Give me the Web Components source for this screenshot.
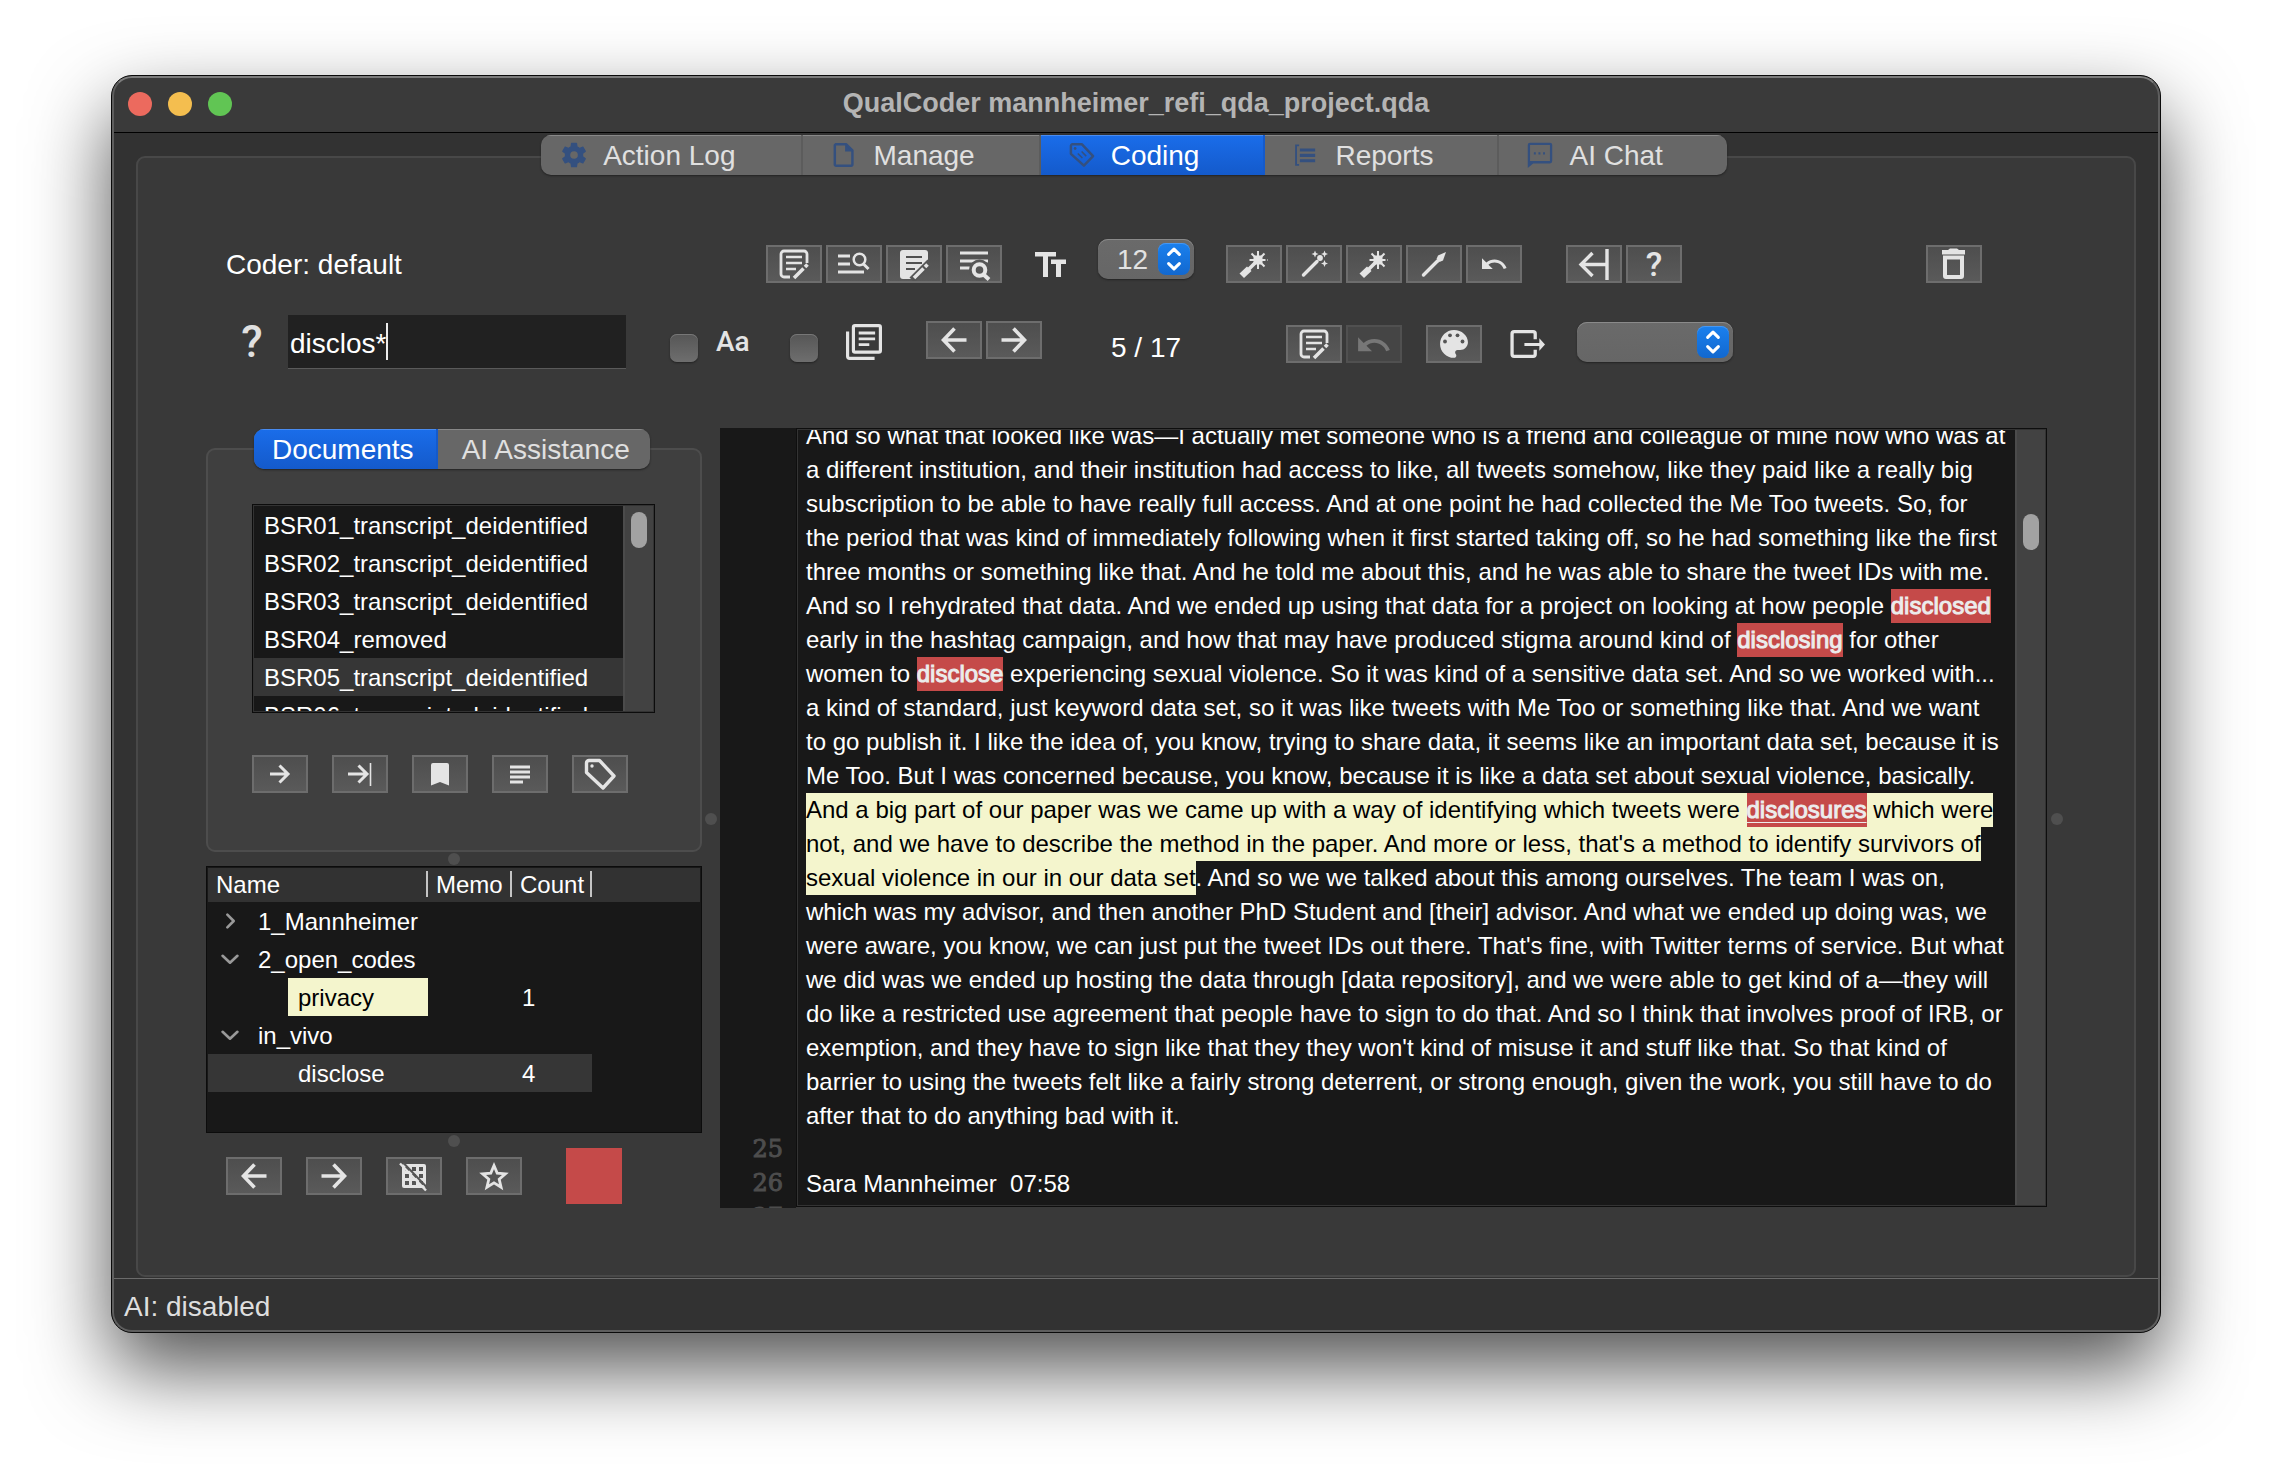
<!DOCTYPE html>
<html lang="en">
<head>
<meta charset="utf-8">
<title>QualCoder</title>
<style>
html { height: 100%; }
body {
  margin: 0; min-height: 100%; box-sizing: border-box; padding: 75px 111px 147px;
  display: flex; background: #fff; color: #fff;
  font: 28px/32px "Liberation Sans", Arial, sans-serif;
}
qc-window { flex: 1; }
</style>
</head>
<body>
<qc-window heading="QualCoder mannheimer_refi_qda_project.qda">
  <qc-workspace></qc-workspace>
  <span slot="status">AI: disabled</span>
</qc-window>

<script>
const line = 'fill="none" stroke="currentColor"';
const noteBody = 'M13 30H7a3 3 0 0 1-3-3V7a3 3 0 0 1 3-3h20a3 3 0 0 1 3 3v9';
const ICONS = {
  note: `<path ${line} stroke-width="2.800" d="${noteBody}"/><path ${line} stroke-width="2.500" d="M9 10h16M9 16h16M9 22h10"/><path ${line} stroke-width="3.600" d="M17 31l9.500-9.500"/><path ${line} stroke-width="3.600" d="M28 20l2.500-2.500"/>`,
  noteFilled: `<path fill="currentColor" d="M6 3h22a3 3 0 0 1 3 3v11L17 32H6a3 3 0 0 1-3-3V6a3 3 0 0 1 3-3z"/><path fill="none" stroke="#505050" stroke-width="2" d="M9 10h16M9 16h16M9 22h9"/><path fill="none" stroke="#555" stroke-width="7" d="M15 33l18-18"/><path ${line} stroke-width="3.600" d="M17 31l9.500-9.500"/><path ${line} stroke-width="3.600" d="M28 20l2.500-2.500"/>`,
  listSearch: `<path ${line} stroke-width="3" d="M1 9h12M1 17h12M1 25h26"/><circle ${line} stroke-width="2.500" cx="22.500" cy="12.500" r="5.800"/><path ${line} stroke-width="3" d="M26.500 17l5 5"/>`,
  fileSearch: `<path ${line} stroke-width="3.200" d="M3 6h28M3 14h28M3 21h11"/><circle fill="none" stroke="#555" stroke-width="8" cx="22.500" cy="23" r="6.500"/><circle ${line} stroke-width="4" cx="22.500" cy="23" r="5.800"/><path ${line} stroke-width="4" d="M26.500 27.500l5.500 5"/>`,
  burst: `<rect fill="currentColor" x="16.500" y="8.500" width="9" height="9" rx="1.500"/><path ${line} stroke-width="2" d="M21 4v18M12.500 13H28M14.500 6.500l13 13M27.500 6.500l-13 13"/><path ${line} stroke-width="1" stroke-dasharray="1 1" d="M28 13h4"/><path ${line} stroke-width="3.600" d="M18 16l-7 7"/><path fill="currentColor" d="M10 19.500l4.500 4.500L7 31l-4.500-4.500z"/>`,
  sparkle: `<path ${line} stroke-width="3.400" stroke-linecap="round" d="M6.500 28L20 14.500"/><circle fill="currentColor" cx="23" cy="11" r="2.900"/><path fill="currentColor" d="M18 3.500l1 2.500 2.500 1-2.500 1-1 2.500-1-2.500-2.500-1 2.500-1zM27.500 3.500l1 2.500 2.500 1-2.500 1-1 2.500-1-2.500-2.500-1 2.500-1zM27.500 13l1 2.500 2.500 1-2.500 1-1 2.500-1-2.500-2.500-1 2.500-1z"/>`,
  picker: `<path ${line} stroke-width="3.400" stroke-linecap="round" d="M6.500 28L20.500 14"/><path fill="currentColor" d="M29 5l-3 8.500-3.500 1.500-3-3 1.500-3.500z"/>`,
  undo: `<path fill="currentColor" transform="translate(2.600 2.800) scale(1.200)" d="M12.500 8c-2.650 0-5.050.99-6.900 2.600L2 7v9h9l-3.620-3.620c1.390-1.160 3.160-1.880 5.120-1.880 3.540 0 6.550 2.310 7.600 5.500l2.370-.78C21.080 11.030 17.150 8 12.500 8z"/>`,
  undoBig: `<path fill="currentColor" transform="translate(-2 -.5) scale(1.550)" d="M12.500 8c-2.650 0-5.050.99-6.900 2.600L2 7v9h9l-3.620-3.620c1.390-1.160 3.160-1.880 5.120-1.880 3.540 0 6.550 2.310 7.600 5.500l2.370-.78C21.080 11.030 17.150 8 12.500 8z"/>`,
  backBar: `<path ${line} stroke-width="3.400" d="M30 2v31M30 17.500H4M15.500 6L4 17.500 15.500 29"/>`,
  trash: `<path fill="currentColor" d="M5 3h6l2-1.500h7L22 3h6v4.500H5z"/><path ${line} stroke-width="4" d="M8 10.500h17V29a1 1 0 0 1-1 1H9a1 1 0 0 1-1-1z"/>`,
  left: `<path ${line} stroke-width="3.600" d="M29.500 17H7M17.500 5.500L6.500 17l11 11.500"/>`,
  right: `<path ${line} stroke-width="3.600" d="M4.500 17H27M16.500 5.500L27.500 17l-11 11.500"/>`,
  rightSmall: `<path ${line} stroke-width="3" d="M7 17h18M16.500 8.500L25 17l-8.500 8.500"/>`,
  rightBar: `<path ${line} stroke-width="3" d="M5 17h19M15.500 8.500L24 17l-8.500 8.500"/><path ${line} stroke-width="1.600" d="M27.500 6v23"/>`,
  bookmark: `<path fill="currentColor" d="M10 6h14a2 2 0 0 1 2 2v20.500l-9-3.500-9 3.500V8a2 2 0 0 1 2-2z"/>`,
  lines: `<path ${line} stroke-width="2.800" d="M7 10h20M7 15h20M7 20h20M7 25h13"/>`,
  tag: `<path ${line} stroke-width="3.400" stroke-linejoin="round" d="M3.500 6a2.500 2.500 0 0 1 2.500-2.500h10.500L31 19 20 31 3.500 15.500z"/><circle fill="currentColor" cx="9" cy="9" r="1.700"/>`,
  gridOff: `<path fill="currentColor" fill-rule="evenodd" d="M7 5h20a2 2 0 0 1 2 2v20a2 2 0 0 1-2 2H7a2 2 0 0 1-2-2V7a2 2 0 0 1 2-2zM8 8v4h4V8zm7 0v4h4V8zm7 0v4h4V8zM8 15v4h4v-4zm7 0v4h4v-4zm7 0v4h4v-4zM8 22v4h4v-4zm7 0v4h4v-4zm7 0v4h4v-4z"/><path fill="none" stroke="#555" stroke-width="2" d="M6 3.500l26 27"/><path ${line} stroke-width="2.400" d="M3 4.500l26 27"/>`,
  star: `<path ${line} stroke-width="2.800" d="M17 6.500l3.200 7.600 8.200.7-6.200 5.400 1.900 8-7.100-4.300-7.100 4.300 1.900-8-6.200-5.400 8.200-.7z"/>`,
  palette: `<path fill="currentColor" transform="translate(-1.600 -1.700) scale(1.550)" d="M12 3c-4.970 0-9 4.030-9 9s4.030 9 9 9c.83 0 1.500-.67 1.500-1.500 0-.39-.15-.74-.39-1.010-.23-.26-.38-.61-.38-.99 0-.83.67-1.500 1.500-1.500H16c2.760 0 5-2.240 5-5 0-4.420-4.030-8-9-8z"/><g fill="#555"><circle cx="8" cy="14.500" r="1.900"/><circle cx="13" cy="8.300" r="1.900"/><circle cx="20.500" cy="8.300" r="1.900"/><circle cx="25.500" cy="14.500" r="1.900"/></g>`,
  textSize: `<path fill="currentColor" d="M1 3h21v4.500h-8V28H9V7.500H1zM17 10.500h15V15h-5v13h-5V15h-5z"/>`,
  books: `<rect ${line} stroke-width="3" x="7" y="1.500" width="25.500" height="25" rx="1.500"/><path ${line} stroke-width="3" d="M1.500 7v23.500a2 2 0 0 0 2 2H27"/><path ${line} stroke-width="2.600" d="M12 8.500h15.500M12 14h15.500M12 19.500h10"/>`,
  exit: `<path ${line} stroke-width="3.200" d="M24.500 12V6.500a2 2 0 0 0-2-2H4a2 2 0 0 0-2 2v20a2 2 0 0 0 2 2h18.500a2 2 0 0 0 2-2V22"/><path fill="currentColor" d="M14 15.500h14.500V11l5.500 6-5.500 6v-4.500H14z"/>`,
  gear: `<path fill="currentColor" fill-rule="evenodd" transform="translate(-3 -3) scale(1.670)" d="M19.140 12.940c.04-.3.060-.61.060-.94 0-.32-.02-.64-.07-.94l2.030-1.580a.49.49 0 0 0 .12-.61l-1.920-3.320a.488.488 0 0 0-.59-.22l-2.390.96c-.5-.38-1.030-.7-1.620-.94l-.36-2.540a.484.484 0 0 0-.48-.41h-3.840c-.24 0-.43.17-.47.41l-.36 2.540c-.59.24-1.130.57-1.620.94l-2.390-.96c-.22-.08-.47 0-.59.22L2.740 8.870c-.12.21-.08.47.12.61l2.030 1.580c-.05.3-.09.63-.09.94s.02.64.07.94l-2.030 1.580a.49.49 0 0 0-.12.61l1.920 3.320c.12.22.37.29.59.22l2.390-.96c.5.38 1.030.7 1.620.94l.36 2.540c.05.24.24.41.48.41h3.840c.24 0 .44-.17.47-.41l.36-2.540c.59-.24 1.130-.56 1.620-.94l2.390.96c.22.08.47 0 .59-.22l1.920-3.320c.12-.22.07-.47-.12-.61l-2.010-1.580zM12 15a3 3 0 1 1 0-6 3 3 0 0 1 0 6z"/>`,
  file: `<path ${line} stroke-width="3.200" stroke-linejoin="round" d="M6 3h14l8 8v18.500a1.500 1.500 0 0 1-1.500 1.500h-20A1.500 1.500 0 0 1 5 29.500V4z"/><path fill="currentColor" d="M18.500 3v9.500H28z"/>`,
  tagLines: `<path ${line} stroke-width="3.200" stroke-linejoin="round" d="M2.500 5a2 2 0 0 1 2-2H17l14.500 15.500L19.500 31 2.500 15.500z"/><path ${line} stroke-width="2" d="M11.500 15l6 6M16.500 12.500l6 6"/><circle fill="currentColor" cx="8" cy="8.500" r="1.800"/>`,
  report: `<path ${line} stroke-width="2.400" d="M8 4.500H4v25.500h4"/><path ${line} stroke-width="4" d="M9 10.500h20M9 17.500h20M9 24.500h20"/>`,
  chat: `<path fill="currentColor" fill-rule="evenodd" d="M4 1h26a3 3 0 0 1 3 3v21a3 3 0 0 1-3 3H8l-7 6V4a3 3 0 0 1 3-3zm0 3v21h26V4z"/><path ${line} stroke-width="3" stroke-dasharray="2.500 3.500" d="M9 15h16"/>`,
  updown: `<path fill="none" stroke="#fff" stroke-width="4" stroke-linecap="round" stroke-linejoin="round" d="M10 11l7-7 7 7M10 23l7 7 7-7"/>`,
  chevronRight: `<path ${line} stroke-width="5" stroke-linecap="round" stroke-linejoin="round" d="M12 5l12 12-12 12"/>`,
  chevronDown: `<path ${line} stroke-width="5" stroke-linecap="round" stroke-linejoin="round" d="M3 11l14 13 14-13"/>`
};

function define(name, template) {
  customElements.define(name, class extends HTMLElement {
    connectedCallback() {
      if (this.shadowRoot) return;
      this.attachShadow({ mode: 'open' }).innerHTML =
        typeof template === 'function' ? template(this) : template;
    }
  });
}

/* 34-unit icon; the box size comes from --icon */
define('qc-icon', el => `
<style>
:host { display: inline-flex; flex: none; width: var(--icon, 34px); height: var(--icon, 34px); }
svg { width: 100%; height: 100%; display: block; }
</style>
<svg viewBox="0 0 34 34" aria-hidden="true">${ICONS[el.getAttribute('name')]}</svg>`);

define('qc-button', el => `
<style>
:host { display: block; flex: none; }
button {
  box-sizing: border-box; width: 56px; height: 38px; padding: 0; display: flex;
  align-items: center; justify-content: center; color: #e4e4e4;
  background: linear-gradient(#4e4e4e, #5a5a5a); border: 2px solid #6d6d6d; border-radius: 0;
  font: 500 34px/34px Roboto, sans-serif;
}
button:disabled { color: #777; background: #454545; border-color: #505050; }
</style>
<button type="button" aria-label="${el.getAttribute('label')}" ${el.hasAttribute('disabled') ? 'disabled' : ''}>
${el.hasAttribute('icon') ? `<qc-icon name="${el.getAttribute('icon')}"></qc-icon>` : '<slot></slot>'}
</button>`);

define('qc-select', el => `
<style>
:host { display: grid; flex: none; width: 96px; height: 40px; border-radius: 10px;
  background: linear-gradient(#6a6a6a, #666); box-shadow: 0 1px 2px #222, inset 0 1px 0 #8a8a8a; }
:host([wide]) { width: 156px; }
select { grid-area: 1 / 1; appearance: none; box-sizing: border-box; width: 100%; height: 40px; margin: 0; padding: 2px 0 0 19px;
  border: 0; background: none; color: #e2e2e2; font: inherit; }
span { grid-area: 1 / 1; justify-self: end; align-self: center; width: 32px; height: 32px; margin-right: 4px;
  border-radius: 8px; background: linear-gradient(#1a80ee, #1268cf); display: flex; align-items: center;
  justify-content: center; pointer-events: none; box-shadow: inset 0 1px 0 #4798f2; --icon: 26px; }
</style>
<select aria-label="${el.getAttribute('label')}"><option>${el.getAttribute('value') || ''}</option></select>
<span><qc-icon name="updown"></qc-icon></span>`);

define('qc-check', `
<style>
:host { display: block; flex: none; }
label { display: flex; align-items: center; }
input { appearance: none; box-sizing: border-box; width: 28px; height: 28px; margin: 12px 0 0; border-radius: 7px;
  background: linear-gradient(#565656, #6e6e6e); box-shadow: 0 1px 2px #222, inset 0 1px 0 #777; }
::slotted(*) { color: #e4e4e4; }
</style>
<label><input type="checkbox"><slot></slot></label>`);

define('qc-tabs', `
<style>
:host { display: flex; width: max-content; height: 40px; border-radius: 10px; overflow: hidden; position: relative; z-index: 1;
  background: #676767; box-shadow: 0 1px 2px #222; }
</style>
<slot></slot>`);
define('qc-tab', el => `
<style>
:host { display: flex; }
button { height: 40px; display: flex; align-items: center; gap: 16px; margin: 0; border: 0; border-right: 2px solid #5c5c5c;
  padding: 0 64px 0 28px; background: transparent; box-shadow: inset 0 1px 0 #888; color: #e0e0e0; font: inherit; white-space: nowrap; --icon: 26px; }
span { padding-top: 2px; }
qc-icon { color: #34507f; }
:host([first]) button { padding: 0 66px 0 20px; }
:host([active]) button { background: linear-gradient(#1a6dea, #145acb); color: #fff; border-color: #145acb; box-shadow: inset 0 1px 0 #4a8cf0; }
:host(:last-child) button { border-right: 0; }
:host([plain]) button { padding: 0 22px 0 18px; }
:host([plain]:last-child) button { padding: 0 20px 0 24px; }
</style>
<button type="button" role="tab" aria-selected="${el.hasAttribute('active')}">${el.hasAttribute('icon') ? `<qc-icon name="${el.getAttribute('icon')}"></qc-icon>` : ''}<span><slot></slot></span></button>`);

define('qc-handle', `
<style>
:host { display: flex; align-items: center; justify-content: center; flex: none; }
i { width: 12px; height: 12px; border-radius: 50%; background: #4f4f4f; }
</style><i></i>`);

define('qc-scrollbar', `
<style>
:host { display: block; flex: none; box-sizing: border-box; width: 30px; border-left: 2px solid #4b4b4b; background: #424242; padding: 6px; }
i { display: block; width: 16px; height: 36px; border-radius: 8px; background: #a2a2a2; }
</style><i></i>`);

define('qc-window', el => `
<style>
:host { display: flex; flex-direction: column; position: relative; box-sizing: border-box; border: 1px solid #0a0a0a;
  border-radius: 21px; overflow: hidden; background: #323232; box-shadow: 0 36px 80px rgba(0,0,0,.68); }
:host::after { content: ""; position: absolute; inset: 0; border: 2px solid #5e5e5e; border-top-color: #7c7c7c; border-radius: 20px; pointer-events: none; }
header { height: 56px; flex: none; display: grid; grid-template-columns: 1fr auto 1fr; align-items: center;
  background: #3a3a3a; border-bottom: 1px solid #000; }
.lights { display: flex; gap: 16px; padding-left: 16px; }
.lights i { width: 24px; height: 24px; border-radius: 50%; background: #ec6a5e; }
.lights i:nth-child(2) { background: #f4be4f; }
.lights i:nth-child(3) { background: #61c554; }
h1 { margin: 0; font: bold 27px/32px "Liberation Sans", Arial, sans-serif; color: #b4b4b4; padding-bottom: 2px; }
main { flex: 1; display: flex; flex-direction: column; padding: 2px 24px 1px; }
footer { box-sizing: border-box; height: 54px; flex: none; display: flex; align-items: center; padding: 2px 0 0 12px; border-top: 1px solid #6b6b6b; color: #dedede; }
::slotted(qc-workspace) { flex: 1; }
</style>
<header><div class="lights"><i></i><i></i><i></i></div><h1>${el.getAttribute('heading')}</h1></header>
<main><slot></slot></main>
<footer><slot name="status"></slot></footer>`);

define('qc-toolbar', `
<style>
:host { display: block; padding: 0 12px 0 20px; }
.row { display: flex; }
.first { height: 44px; align-items: flex-end; padding-right: 72px; }
.second { height: 54px; align-items: center; margin-top: 32px; }
.coder { width: 540px; height: 38px; line-height: 40px; }
.group { display: flex; gap: 4px; }
.ml24 { margin-left: 24px; } .ml32 { margin-left: 32px; } .ml44 { margin-left: 44px; }
.end { margin-left: auto; }
.top { align-self: flex-start; margin-left: 30px; }
qc-icon { color: #e4e4e4; }
.size { margin-left: 32px; }
.help { width: 52px; margin-right: 10px; text-align: center; color: #e0e0e0; font: 500 44px/50px Roboto, sans-serif; }
.search { box-sizing: border-box; width: 338px; height: 54px; margin: 0; border: 0; border-bottom: 1px solid #5a5a5a; outline: 0;
  background: #212121; display: flex; align-items: center; padding: 0 2px; }
.search input { field-sizing: content; min-width: 0; padding: 4px 0 0; border: 0; outline: 0; background: none; color: #fff; font: inherit; }
.search i { width: 2px; height: 37px; background: #ececec; }
.case { padding-left: 18px; width: 92px; box-sizing: border-box; font: 500 28px/50px Roboto, sans-serif; }
.all { --icon: 36px; margin-left: 28px; }
.raise { padding-bottom: 4px; } .lower { padding-top: 4px; }
.count { width: 208px; margin: 0 36px 0 0; text-align: center; padding-top: 12px; }
.exit { --icon: 35px; margin-left: 28px; }
</style>
<div class="row first">
  <div class="coder">Coder: default</div>
  <div class="group">
    <qc-button icon="note" label="Document memo"></qc-button>
    <qc-button icon="listSearch" label="Show codes like"></qc-button>
    <qc-button icon="noteFilled" label="Annotate"></qc-button>
    <qc-button icon="fileSearch" label="Find annotations"></qc-button>
  </div>
  <qc-icon class="size" name="textSize"></qc-icon>
  <qc-select class="top" label="Font size" value="12"></qc-select>
  <div class="group ml32">
    <qc-button icon="burst" label="Auto code all"></qc-button>
    <qc-button icon="sparkle" label="Auto code sentences"></qc-button>
    <qc-button icon="burst" label="Auto code surround"></qc-button>
    <qc-button icon="picker" label="Mark speakers"></qc-button>
    <qc-button icon="undo" label="Undo auto code"></qc-button>
  </div>
  <div class="group ml44">
    <qc-button icon="backBar" label="Hide side panel"></qc-button>
    <qc-button label="Help">?</qc-button>
  </div>
  <div class="end"><qc-button icon="trash" label="Delete"></qc-button></div>
</div>
<div class="row second">
  <div class="help">?</div>
  <div class="search"><input type="text" aria-label="Search text" value="disclos*"><i></i></div>
  <qc-check class="ml44"><div class="case">Aa</div></qc-check>
  <qc-check><qc-icon class="all" name="books"></qc-icon></qc-check>
  <div class="group raise ml44">
    <qc-button icon="left" label="Previous match"></qc-button>
    <qc-button icon="right" label="Next match"></qc-button>
  </div>
  <div class="count">5 / 17</div>
  <div class="group lower">
    <qc-button icon="note" label="Code memo"></qc-button>
    <qc-button icon="undoBig" label="Undo" disabled></qc-button>
  </div>
  <div class="group lower ml24"><qc-button icon="palette" label="Colour"></qc-button></div>
  <div class="group lower exit"><qc-icon name="exit"></qc-icon></div>
  <qc-select class="ml32" wide label="Export format"></qc-select>
</div>`);

define('qc-documents', `
<style>
:host { display: flex; flex-direction: column; padding-top: 1px; }
qc-tabs { margin: 0 0 -21px 48px; }
section { border: 2px solid #4d4d4d; border-radius: 9px; background: #3f3f3f; padding: 54px 44px 57px; }
.list { height: 205px; width: 399px; border: 1px solid #0c0c0c; outline: 1px solid #333; outline-offset: -2px; overflow: hidden; display: flex; background: #181818; padding: 1px; }
ul { flex: 1; margin: 0; padding: 0; list-style: none; font-size: 24px; line-height: 36px; }
li { padding: 2px 0 0 10px; }
li.on { background: #363636; }
.bar { display: flex; gap: 24px; margin-top: 42px; }
</style>
<qc-tabs role="tablist"><qc-tab plain active>Documents</qc-tab><qc-tab plain>AI Assistance</qc-tab></qc-tabs>
<section>
  <div class="list">
    <ul>
      <li>BSR01_transcript_deidentified</li><li>BSR02_transcript_deidentified</li><li>BSR03_transcript_deidentified</li>
      <li>BSR04_removed</li><li class="on">BSR05_transcript_deidentified</li><li>BSR06_transcript_deidentified</li>
    </ul>
    <qc-scrollbar></qc-scrollbar>
  </div>
  <div class="bar">
    <qc-button icon="rightSmall" label="Latest document"></qc-button>
    <qc-button icon="rightBar" label="Next document"></qc-button>
    <qc-button icon="bookmark" label="Bookmark"></qc-button>
    <qc-button icon="lines" label="Attributes"></qc-button>
    <qc-button icon="tag" label="Tag"></qc-button>
  </div>
</section>`);

define('qc-codes', `
<style>
:host { display: block; flex: 1; border: 1px solid #0c0c0c; padding: 1px; background: #181818; }
table { width: 100%; border-collapse: collapse; table-layout: fixed; font-size: 24px; line-height: 28px; }
th { height: 34px; padding: 0 0 0 8px; text-align: left; font-weight: normal; background: #323232; white-space: nowrap; }
th:not(:last-child) { background: linear-gradient(#c4c4c4, #c4c4c4) right 3px / 2px 26px no-repeat #323232; }
td { box-sizing: border-box; height: 38px; padding: 2px 0 0 10px; }
td:first-child { padding: 0; }
tr.on td:not(:last-child) { background: #363636; }
div { box-sizing: border-box; display: flex; align-items: center; height: 38px; padding: 2px 0 0 8px; }
div.child { margin-left: 80px; padding-left: 10px; }
div.code { background: #f4f5cd; color: #000; }
span { width: 42px; padding: 0 14px 2px 0; box-sizing: border-box; display: flex; justify-content: center; flex: none; }
qc-icon { --icon: 18px; color: #999; }
</style>
<table>
  <colgroup><col style="width:220px"><col style="width:84px"><col style="width:80px"><col></colgroup>
  <thead><tr><th>Name</th><th>Memo</th><th>Count</th><th></th></tr></thead>
  <tbody>
    <tr><td><div><span><qc-icon name="chevronRight"></qc-icon></span>1_Mannheimer</div></td><td></td><td></td><td></td></tr>
    <tr><td><div><span><qc-icon name="chevronDown"></qc-icon></span>2_open_codes</div></td><td></td><td></td><td></td></tr>
    <tr><td><div class="child code">privacy</div></td><td></td><td>1</td><td></td></tr>
    <tr><td><div><span><qc-icon name="chevronDown"></qc-icon></span>in_vivo</div></td><td></td><td></td><td></td></tr>
    <tr class="on"><td><div class="child">disclose</div></td><td></td><td>4</td><td></td></tr>
  </tbody>
</table>`);

/* [[word]] is an in-vivo code, [[_word]] the current match, {{...}} a coded passage */
const TRANSCRIPT = `And so what that looked like was—I actually met someone who is a friend and colleague of mine now who was at
a different institution, and their institution had access to like, all tweets somehow, like they paid like a really big
subscription to be able to have really full access. And at one point he had collected the Me Too tweets. So, for
the period that was kind of immediately following when it first started taking off, so he had something like the first
three months or something like that. And he told me about this, and he was able to share the tweet IDs with me.
And so I rehydrated that data. And we ended up using that data for a project on looking at how people [[disclosed]]
early in the hashtag campaign, and how that may have produced stigma around kind of [[disclosing]] for other
women to [[disclose]] experiencing sexual violence. So it was kind of a sensitive data set. And so we worked with...
a kind of standard, just keyword data set, so it was like tweets with Me Too or something like that. And we want
to go publish it. I like the idea of, you know, trying to share data, it seems like an important data set, because it is
Me Too. But I was concerned because, you know, because it is like a data set about sexual violence, basically.
{{And a big part of our paper was we came up with a way of identifying which tweets were }}[[_disclosures]]{{ which were}}
{{not, and we have to describe the method in the paper. And more or less, that's a method to identify survivors of}}
{{sexual violence in our in our data set}}. And so we we talked about this among ourselves. The team I was on,
which was my advisor, and then another PhD Student and [their] advisor. And what we ended up doing was, we
were aware, you know, we can just put the tweet IDs out there. That's fine, with Twitter terms of service. But what
we did was we ended up hosting the data through [data repository], and we were able to get kind of a—they will
do like a restricted use agreement that people have to sign to do that. And so I think that involves proof of IRB, or
exemption, and they have to sign like that they they won't kind of misuse it and stuff like that. So that kind of
barrier to using the tweets felt like a fairly strong deterrent, or strong enough, given the work, you still have to do
after that to do anything bad with it.

Sara Mannheimer  07:58`;
const markUp = text => text
  .replace(/\[\[_(.*?)\]\]/g, '<mark class="in-vivo current">$1</mark>')
  .replace(/\[\[(.*?)\]\]/g, '<mark class="in-vivo">$1</mark>')
  .replace(/\{\{(.*?)\}\}/g, '<mark>$1</mark>');

define('qc-transcript', `
<style>
:host { display: flex; background: #181818; font-size: 24px; line-height: 34px; height: 780px; overflow: hidden; }
ol { flex: none; box-sizing: border-box; width: 76px; margin: 0; padding: 704px 13px 0 0; list-style: none; text-align: right;
  font-family: "DejaVu Serif", serif; color: #4d4d4d; -webkit-text-stroke: 1px #4d4d4d; }
.wrap { flex: 1; min-width: 0; padding-bottom: 1px; background: #393939; display: flex; }
.pane { flex: 1; min-width: 0; display: flex; border: 1px solid #0e0e0e; outline: 1px solid #333; outline-offset: -2px; padding: 1px; overflow: hidden; background: #181818; }
.text { flex: 1; min-width: 0; overflow: hidden; padding-left: 8px; }
p { margin: 0; white-space: pre; height: 34px; }
p:first-child { margin-top: -11px; }
mark { display: inline-block; height: 34px; color: #000; background: #f4f5cd; vertical-align: top; }
mark.in-vivo { color: #ececec; background: #c54a49; -webkit-text-stroke: 1px #ececec; }
mark.current { text-decoration: underline; text-decoration-thickness: 1px; text-underline-offset: 4px; text-decoration-skip-ink: none; }
qc-scrollbar { padding-top: 84px; }
</style>
<ol><li>25</li><li>26</li><li>27</li></ol>
<div class="wrap"><div class="pane">
<div class="text">${TRANSCRIPT.split('\n').map(row => `<p>${markUp(row)}</p>`).join('')}</div>
<qc-scrollbar></qc-scrollbar>
</div></div>`);

define('qc-workspace', `
<style>
:host { display: flex; flex-direction: column; }
qc-tabs.main { align-self: center; margin: 0 4px -19px 0; }
.box { flex: 1; display: flex; flex-direction: column; border: 2px solid #484848; border-radius: 9px; background: #393939; padding: 81px 68px 66px; }
.split { display: grid; grid-template-columns: 496px 18px minmax(0, 1fr) 19px; margin-top: 59px; flex: 1; }
.side { display: flex; flex-direction: column; }
.h14 { height: 14px; } .h16 { height: 16px; }
.actions { display: flex; gap: 24px; align-items: center; height: 54px; padding: 0 0 6px 20px; }
.swatch { width: 56px; height: 56px; margin-left: 20px; background: #c54a49; }
</style>
<qc-tabs class="main" role="tablist">
  <qc-tab first icon="gear">Action Log</qc-tab><qc-tab icon="file">Manage</qc-tab><qc-tab active icon="tagLines">Coding</qc-tab><qc-tab icon="report">Reports</qc-tab><qc-tab icon="chat">AI Chat</qc-tab>
</qc-tabs>
<div class="box">
  <qc-toolbar></qc-toolbar>
  <div class="split">
    <div class="side">
      <qc-documents></qc-documents>
      <qc-handle class="h14"></qc-handle>
      <qc-codes></qc-codes>
      <qc-handle class="h16"></qc-handle>
      <div class="actions">
        <qc-button icon="left" label="Previous code"></qc-button>
        <qc-button icon="right" label="Next code"></qc-button>
        <qc-button icon="gridOff" label="Hide codes"></qc-button>
        <qc-button icon="star" label="Important"></qc-button>
        <div class="swatch"></div>
      </div>
    </div>
    <qc-handle></qc-handle>
    <qc-transcript></qc-transcript>
    <qc-handle></qc-handle>
  </div>
</div>`);
</script>
</body>
</html>
